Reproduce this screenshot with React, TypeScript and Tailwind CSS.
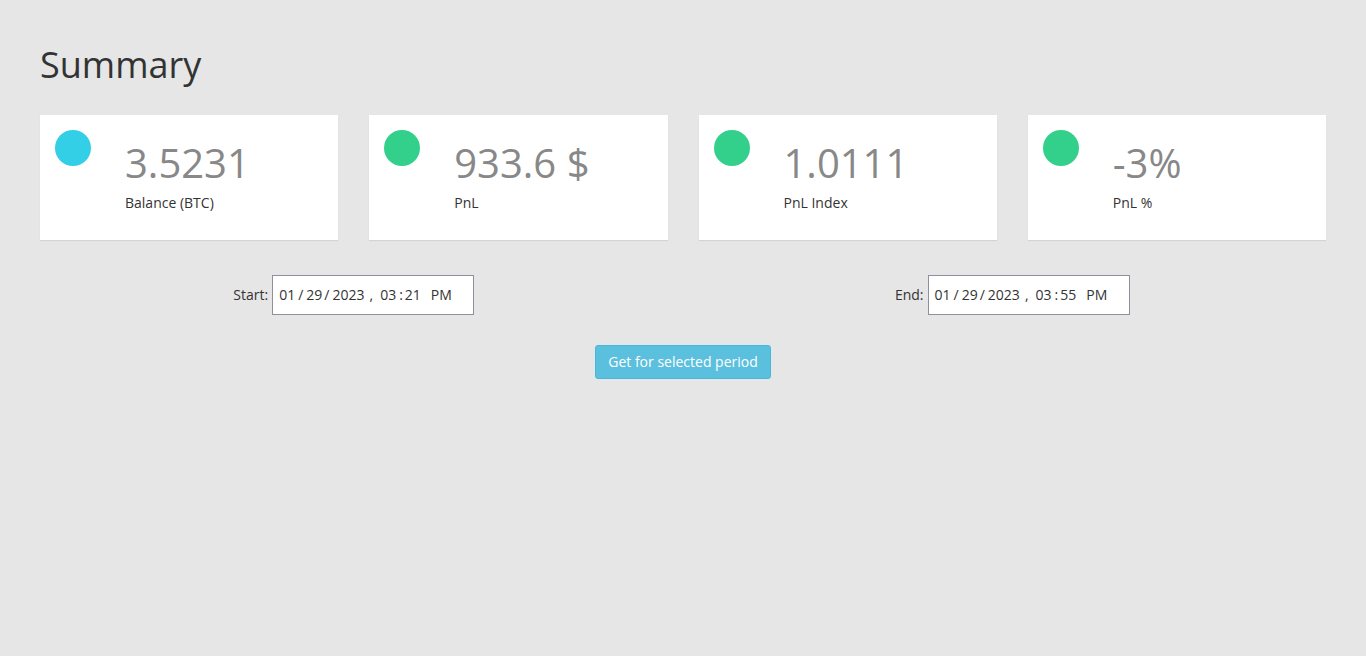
import React from 'react';

interface Stat {
  value: string;
  label: string;
  dot: string;
}

const stats: Stat[] = [
  { value: '3.5231', label: 'Balance (BTC)', dot: 'bg-[#33cfe6]' },
  { value: '933.6 $', label: 'PnL', dot: 'bg-[#33d08b]' },
  { value: '1.0111', label: 'PnL Index', dot: 'bg-[#33d08b]' },
  { value: '-3%', label: 'PnL %', dot: 'bg-[#33d08b]' },
];

// date + time shown the way the browser's datetime field lays it out
function DateField({ label, date, time }: { label: string; date: string[]; time: string[] }) {
  return (
    <div className="flex items-center gap-1">
      <span className="text-sm text-[#333]">{label}</span>
      <div className="flex h-10 w-[202px] items-center border border-[#8f8f9d] bg-white pl-[6px] text-sm text-[#333]">
        <span>{date[0]}</span>
        <span className="ml-[3px]">/</span>
        <span className="ml-[3px]">{date[1]}</span>
        <span className="ml-[2px]">/</span>
        <span className="ml-[3px]">{date[2]}</span>
        <span className="ml-[5px]">,</span>
        <span className="ml-[7px]">{time[0]}</span>
        <span className="ml-[3px]">:</span>
        <span className="ml-[2px]">{time[1]}</span>
        <span className="ml-[10px]">PM</span>
      </div>
    </div>
  );
}

export default function App() {
  return (
    <div className="min-h-[656px] bg-[#e6e6e6] px-10 pt-[45px] [font-family:'Open_Sans',sans-serif]">
      <h1 className="text-[36px] leading-10 text-[#333]">Summary</h1>

      <div className="mt-[30px] grid grid-cols-4 gap-[31px]">
        {stats.map(s => (
          <div key={s.label} className="flex h-[125px] bg-white pl-[15px] pt-[15px] shadow-[0_1px_1px_rgba(0,0,0,0.08)]">
            <div className={`h-9 w-9 shrink-0 rounded-full ${s.dot}`} />
            <div className="ml-[34px] pt-[11px]">
              <p className="text-[40px] leading-[44px] text-[#888]">{s.value}</p>
              <p className="mt-[8px] text-sm leading-5 text-[#333]">{s.label}</p>
            </div>
          </div>
        ))}
      </div>

      <div className="mt-[35px] grid grid-cols-2 gap-[31px]">
        <div className="flex justify-center">
          <DateField label="Start:" date={['01', '29', '2023']} time={['03', '21']} />
        </div>
        <div className="flex justify-center">
          <DateField label="End:" date={['01', '29', '2023']} time={['03', '55']} />
        </div>
      </div>

      <div className="mt-[30px] flex justify-center">
        <button className="h-[34px] w-[176px] rounded-[3px] border border-[#46b8da] bg-[#5bc0de] text-sm text-white">
          Get for selected period
        </button>
      </div>
    </div>
  );
}
